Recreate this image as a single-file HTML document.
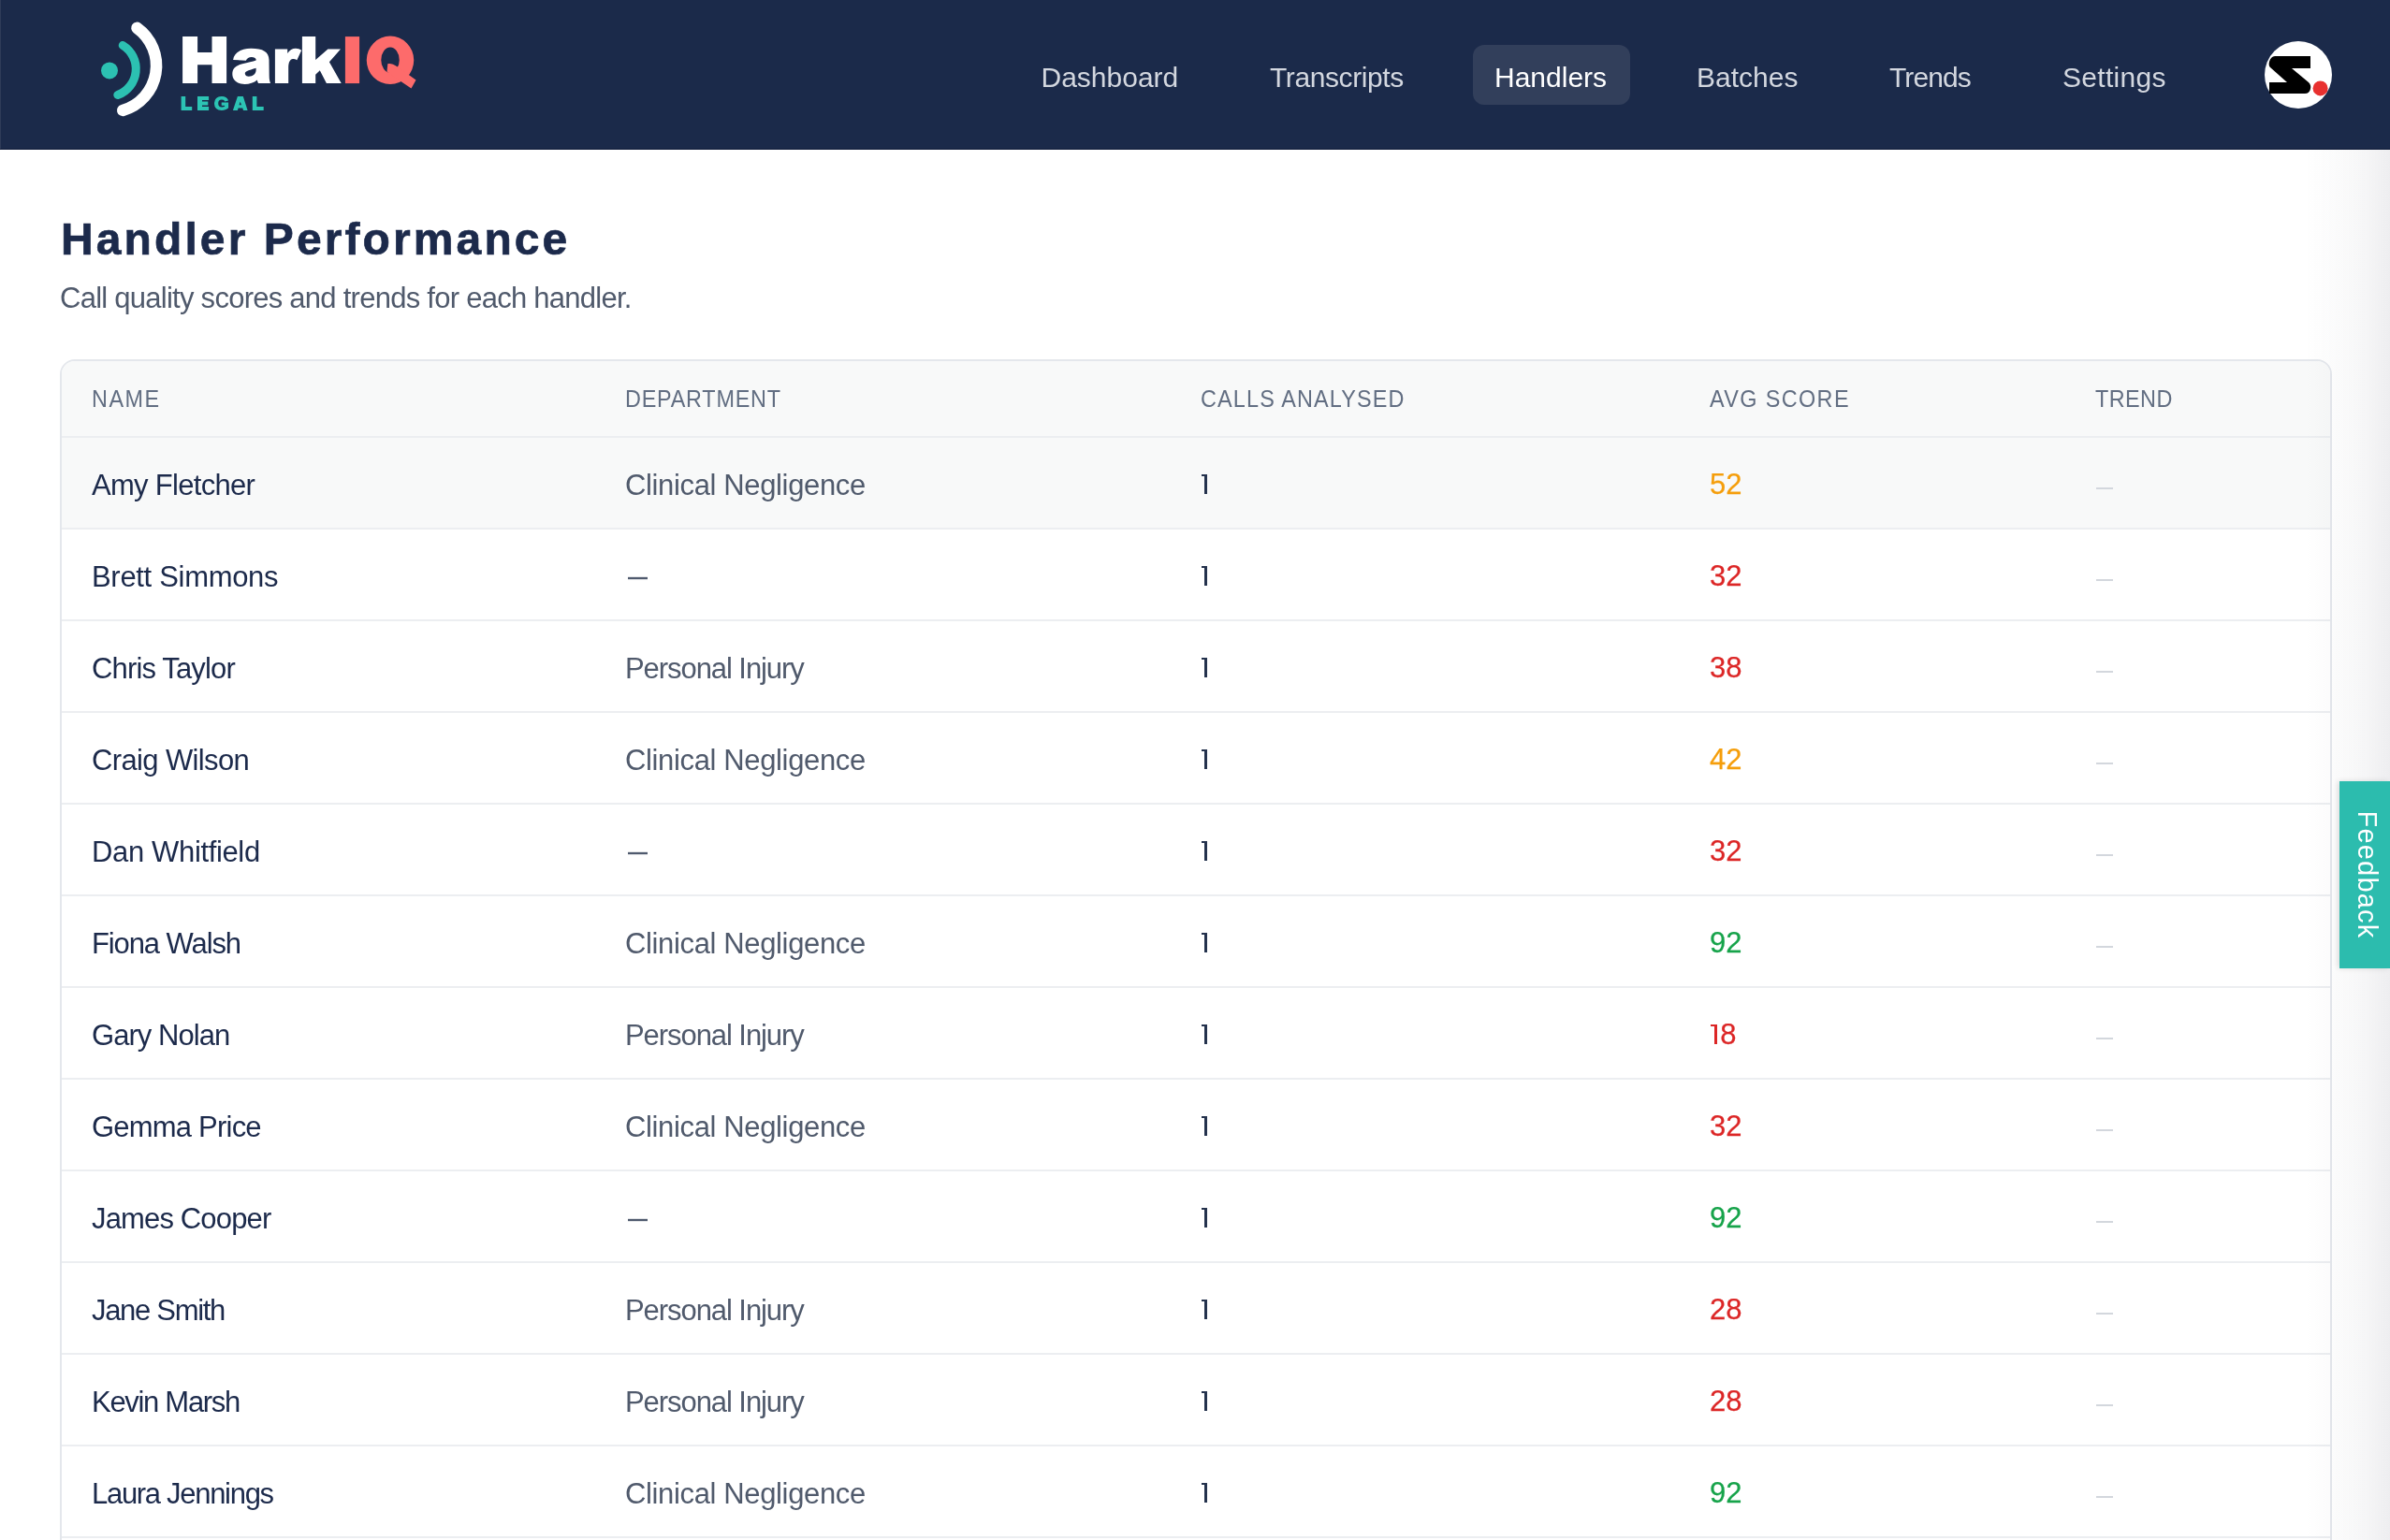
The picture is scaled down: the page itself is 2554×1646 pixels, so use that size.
<!DOCTYPE html>
<html>
<head>
<meta charset="utf-8">
<style>
html,body{margin:0;padding:0;}
body{width:2554px;height:1646px;overflow:hidden;background:#ffffff;position:relative;font-family:"Liberation Sans",sans-serif;}
.abs{position:absolute;white-space:nowrap;}
#hdr{position:absolute;left:0;top:0;width:2554px;height:159px;background:#1b2a4a;border-bottom:1px solid #0e1a38;}
#hdr::before{content:"";position:absolute;left:0;top:0;width:1px;height:159px;background:#2f3c58;}
.nav{position:absolute;top:3px;height:160px;line-height:160px;font-size:30px;color:#d3d7df;white-space:nowrap;}
.pill{position:absolute;left:1574px;top:48px;width:168px;height:64px;border-radius:12px;background:#323f5b;}
#shade{position:absolute;left:2462px;top:160px;width:92px;height:1486px;z-index:5;pointer-events:none;background:linear-gradient(to right,rgba(20,30,40,0),rgba(20,30,40,0.012) 25%,rgba(20,30,40,0.025) 50%,rgba(20,20,50,0.045) 75%,rgba(20,20,50,0.075));}
.card{position:absolute;left:64px;top:384px;width:2424px;height:1400px;border:2px solid #e4e7ec;border-radius:16px;background:#fff;overflow:hidden;}
.row{position:absolute;left:0;width:2424px;border-bottom:2px solid #eceef1;}
.hrow{top:0;height:80px;background:#f8f9f9;}
.drow{height:96px;}
.cell{position:absolute;top:0;white-space:nowrap;}
.hrow .cell{line-height:80px;font-size:26px;color:#626e82;transform:scaleX(0.9);transform-origin:0 0;letter-spacing:1px;}
.drow .cell{line-height:96px;font-size:31px;top:3.2px;}
.c1{left:32px;color:#1c2a4b;}
.c2{left:602px;color:#505a6c;}
.c3{left:1217px;color:#1c2a4b;}
.c4{left:1761px;}
.drow .c4{font-size:31px;top:2px;-webkit-text-stroke:0.25px currentColor;}
.c5{left:2173px;}
.or{color:#f59e0b;}
.rd{color:#dc2626;}
.gr{color:#16a34a;}
.dash{position:absolute;height:2px;background:#d3d7dd;width:18px;left:2174px;top:53px;}
.n1{display:inline-block;position:relative;width:11.2px;height:21px;vertical-align:baseline;}
.n1::before{content:"";position:absolute;left:1px;bottom:0;width:7px;height:2.3px;top:0;background:currentColor;}
.n1::after{content:"";position:absolute;left:5px;bottom:0;width:3px;height:21.3px;background:currentColor;}
.one{position:absolute;left:1217.6px;top:39px;width:6.4px;height:21px;}
.one::before{content:"";position:absolute;left:0;top:0;width:6.4px;height:2px;background:#24324d;}
.one::after{content:"";position:absolute;right:0;top:0;width:2.6px;height:21px;background:#24324d;}
.ddash{position:absolute;height:2px;background:#4f5a6e;width:21px;left:605px;top:51px;box-shadow:0 0.5px 0.5px rgba(74,85,104,0.35),0 -0.5px 0.5px rgba(74,85,104,0.35);}
#fb{position:absolute;z-index:6;left:2500px;top:835px;width:54px;height:200px;background:#2cbcae;box-shadow:-2px 0 6px rgba(0,0,0,0.12);}
#fbt{position:absolute;left:29px;top:100px;transform:translate(-50%,-50%) rotate(90deg);font-size:29px;color:#fff;white-space:nowrap;line-height:1;letter-spacing:1.2px;}
</style>
</head>
<body><div id="wrap" style="position:absolute;left:0;top:0;width:2554px;height:1646px;overflow:hidden;will-change:transform">
<div id="hdr">
  <svg class="abs" style="left:0;top:0" width="190" height="160" viewBox="0 0 190 160">
    <circle cx="117" cy="75.4" r="9" fill="#2cc1b2"/>
    <path d="M131.2 48.5 A29.6 29.6 0 0 1 125.8 101.5" fill="none" stroke="#2cc1b2" stroke-width="9" stroke-linecap="round"/>
    <path d="M146.4 29.8 A49.7 49.7 0 0 1 131.2 117.9" fill="none" stroke="#ffffff" stroke-width="12.5" stroke-linecap="round"/>
  </svg>
  <svg class="abs" style="left:180px;top:20px" width="290" height="110" viewBox="180 20 290 110">
    <g fill="#ffffff">
      <path d="M195.1 39H211.1V56H226.5V39H242.1V88.9H226.5V69.2H211.1V88.9H195.1Z"/>
      <path fill-rule="evenodd" d="M249.1 63.9C250 56 258 51.8 268.3 51.8C281 51.8 287.3 55.5 287.5 64L287.7 81C287.7 84.5 288.2 86.8 289 88.9L276 88.9C275.4 87.8 275 86.6 274.8 85.4C271.5 88.2 266.5 89.9 261.5 89.9C253.5 89.9 248.3 85.5 248.3 79C248.3 72.5 252.5 70 259 68.3C265 66.8 270 65.9 273.6 64.6L273.6 63.5C273.2 61.8 271.5 60.9 268.8 60.9C266 60.9 263.8 62.2 262.8 64.8Z M273.6 72.8C270 74 266 75 263.5 76.2C262 77 261.5 78 262 79.5C262.5 81 264 81.7 265.8 81.7C270.5 81.7 273.6 78.5 273.6 75Z"/>
      <path d="M293.9 88.9V52.6H307.2V57C309.5 53.5 312.5 51.8 316 51.8C318.5 51.8 320.5 52.5 322.2 53.8L317.3 64.3C316 63.5 314.5 63 313 63.1C309.5 63.5 308.5 67 308.2 71.5V88.9Z"/>
      <path d="M322.9 39H337.2V63.9L350.4 52.6H364L351.9 66.2L364.7 88.9H348.9L341.8 75.2L337.2 79.7V88.9H322.9Z"/>
    </g>
    <g fill="#fd6b6b">
      <path d="M368.9 39.1H384.1V89.1H368.9Z"/>
      <path fill-rule="evenodd" d="M417 38.6A25.25 25.7 0 1 1 417 90A25.25 25.7 0 1 1 417 38.6Z M417 50.6A9.75 13.6 0 1 0 417 77.8A9.75 13.6 0 1 0 417 50.6Z"/>
      <path d="M414.3 68.3C416.5 67.6 419.5 67.8 425.3 71.8L444.5 85.5L439.5 94.5L420.2 81.5C418.8 80.5 416.8 79 413.5 76.5Z"/>
    </g>
    <g fill="#2cc4b4">
      <path d="M193.6 103H198.2V113.9H205.2V117.9H193.6Z"/>
      <path d="M211 103H223.1V107H216V108.4H222.3V112.4H216V113.9H223.1V117.9H211Z"/>
      <path d="M236.86 115.12Q238.02 115.12 239.1 114.8Q240.19 114.48 240.78 113.99V112.15H237.32V110.09H243.5V114.99Q242.37 116.07 240.57 116.69Q238.76 117.3 236.78 117.3Q233.32 117.3 231.46 115.5Q229.6 113.7 229.6 110.39Q229.6 107.11 231.47 105.35Q233.34 103.6 236.85 103.6Q241.84 103.6 243.2 107.07L240.46 107.84Q240.02 106.83 239.07 106.31Q238.13 105.79 236.85 105.79Q234.76 105.79 233.67 106.98Q232.59 108.17 232.59 110.39Q232.59 112.65 233.71 113.88Q234.83 115.12 236.86 115.12Z" stroke="#2cc4b4" stroke-width="1.2"/>
      <path fill-rule="evenodd" d="M248.9 117.9L253.9 103H259.8L264.6 117.9H260L259.3 115.4H254.6L253.9 117.9Z M256.7 108.8L255.5 112.3H258Z"/>
      <path d="M269.8 103H274.4V113.9H281.7V117.9H269.8Z"/>
    </g>
  </svg>
  <div class="pill"></div>
  <div class="nav" id="n1" style="left:1112.5px">Dashboard</div>
  <div class="nav" id="n2" style="left:1357px;letter-spacing:-0.4px">Transcripts</div>
  <div class="nav" id="n3" style="left:1597px;color:#ffffff">Handlers</div>
  <div class="nav" id="n4" style="left:1813px">Batches</div>
  <div class="nav" id="n5" style="left:2019px;letter-spacing:-0.9px">Trends</div>
  <div class="nav" id="n6" style="left:2204px;letter-spacing:0.3px">Settings</div>

  <svg class="abs" style="left:2410px;top:34px" width="94" height="94" viewBox="0 0 94 94">
    <circle cx="46" cy="46" r="36" fill="#ffffff"/>
    <path d="M21 26 L59 26 L59 39 L39 39 L57 54 Q60 57 59 61 Q58 66 53 66 L15 66 L15 54 L34 54 L16 38 Q14 36 15 32 Q16.5 26.5 21 26 Z" fill="#000"/>
    <circle cx="69.6" cy="60.4" r="8" fill="#e8302f"/>
  </svg>
</div>

<div id="shade"></div>

<div class="abs" id="title" style="left:65px;top:225.5px;font-size:48px;font-weight:bold;line-height:60px;color:#1c2a4b;letter-spacing:3.1px;-webkit-text-stroke:0.7px #1c2a4b;">Handler Performance</div>
<div class="abs" id="sub" style="left:64px;top:298.7px;font-size:31px;line-height:40px;color:#505a6c;letter-spacing:-0.74px;">Call quality scores and trends for each handler.</div>

<div class="card">
  <div class="row hrow">
    <div class="cell c1" style="color:#626e82;left:31.5px;letter-spacing:1.7px">NAME</div>
    <div class="cell c2" style="color:#626e82;letter-spacing:0.86px">DEPARTMENT</div>
    <div class="cell c3" style="color:#626e82;letter-spacing:1.28px">CALLS ANALYSED</div>
    <div class="cell c4" style="letter-spacing:1.54px">AVG SCORE</div>
    <div class="cell c5" style="letter-spacing:0.48px">TREND</div>
  </div>
  <div class="row drow" style="top:82px;background:#f8f9f9"><div class="cell c1" style="letter-spacing:-0.70px">Amy Fletcher</div><div class="cell c2" style="letter-spacing:-0.36px">Clinical Negligence</div><div class="one"></div><div class="cell c4 or">52</div><div class="dash"></div></div>
  <div class="row drow" style="top:180px"><div class="cell c1" style="letter-spacing:-0.31px">Brett Simmons</div><div class="ddash"></div><div class="one"></div><div class="cell c4 rd">32</div><div class="dash"></div></div>
  <div class="row drow" style="top:278px"><div class="cell c1" style="letter-spacing:-0.85px">Chris Taylor</div><div class="cell c2" style="letter-spacing:-1.07px">Personal Injury</div><div class="one"></div><div class="cell c4 rd">38</div><div class="dash"></div></div>
  <div class="row drow" style="top:376px"><div class="cell c1" style="letter-spacing:-0.63px">Craig Wilson</div><div class="cell c2" style="letter-spacing:-0.36px">Clinical Negligence</div><div class="one"></div><div class="cell c4 or">42</div><div class="dash"></div></div>
  <div class="row drow" style="top:474px"><div class="cell c1" style="letter-spacing:-0.35px">Dan Whitfield</div><div class="ddash"></div><div class="one"></div><div class="cell c4 rd">32</div><div class="dash"></div></div>
  <div class="row drow" style="top:572px"><div class="cell c1" style="letter-spacing:-1.11px">Fiona Walsh</div><div class="cell c2" style="letter-spacing:-0.36px">Clinical Negligence</div><div class="one"></div><div class="cell c4 gr">92</div><div class="dash"></div></div>
  <div class="row drow" style="top:670px"><div class="cell c1" style="letter-spacing:-0.94px">Gary Nolan</div><div class="cell c2" style="letter-spacing:-1.07px">Personal Injury</div><div class="one"></div><div class="cell c4 rd"><span class="n1"></span>8</div><div class="dash"></div></div>
  <div class="row drow" style="top:768px"><div class="cell c1" style="letter-spacing:-0.79px">Gemma Price</div><div class="cell c2" style="letter-spacing:-0.36px">Clinical Negligence</div><div class="one"></div><div class="cell c4 rd">32</div><div class="dash"></div></div>
  <div class="row drow" style="top:866px"><div class="cell c1" style="letter-spacing:-0.85px">James Cooper</div><div class="ddash"></div><div class="one"></div><div class="cell c4 gr">92</div><div class="dash"></div></div>
  <div class="row drow" style="top:964px"><div class="cell c1" style="letter-spacing:-1.31px">Jane Smith</div><div class="cell c2" style="letter-spacing:-1.07px">Personal Injury</div><div class="one"></div><div class="cell c4 rd">28</div><div class="dash"></div></div>
  <div class="row drow" style="top:1062px"><div class="cell c1" style="letter-spacing:-1.30px">Kevin Marsh</div><div class="cell c2" style="letter-spacing:-1.07px">Personal Injury</div><div class="one"></div><div class="cell c4 rd">28</div><div class="dash"></div></div>
  <div class="row drow" style="top:1160px"><div class="cell c1" style="letter-spacing:-1.30px">Laura Jennings</div><div class="cell c2" style="letter-spacing:-0.36px">Clinical Negligence</div><div class="one"></div><div class="cell c4 gr">92</div><div class="dash"></div></div>
  <div class="row drow" style="top:1258px"><div class="cell c1">Mark Davies</div><div class="cell c2" style="letter-spacing:-1.07px">Personal Injury</div><div class="one"></div><div class="cell c4 rd">32</div><div class="dash"></div></div>
</div>

<div id="fb"><div id="fbt">Feedback</div></div>
</div></body>
</html>
